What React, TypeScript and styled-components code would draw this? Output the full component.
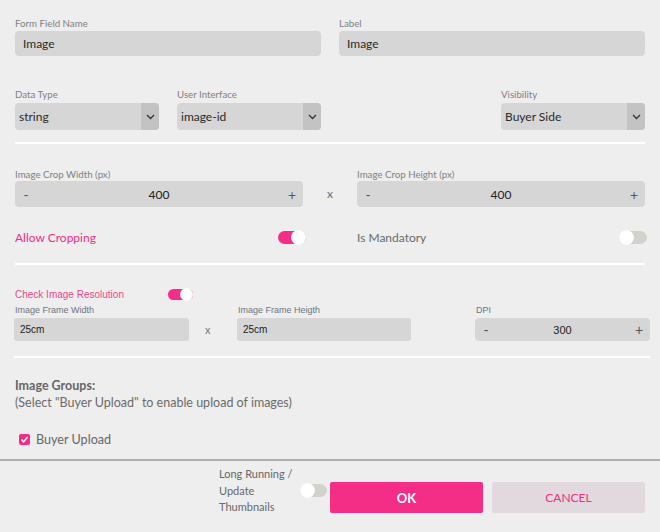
import React from "react";
import styled, { createGlobalStyle } from "styled-components";

const PINK = "#f42d86";

const Global = createGlobalStyle`
  html, body { margin: 0; padding: 0; background: #eeeeee; }
  body { font-family: Lato, "Open Sans", sans-serif; }
  * { box-sizing: border-box; }
`;

const Page = styled.div`
  width: 660px;
  height: 532px;
  background: #eeeeee;
  display: flex;
  flex-direction: column;
  overflow: hidden;
`;

const Section = styled.div<{ $top: number }>`
  padding: 0 15px;
  margin-top: ${(p) => p.$top}px;
`;

const Grid = styled.div<{ $cols: string; $gap?: number }>`
  display: grid;
  grid-template-columns: ${(p) => p.$cols};
  column-gap: ${(p) => p.$gap ?? 18}px;
  align-items: start;
`;

const Field = styled.div<{ $gap?: number }>`
  display: flex;
  flex-direction: column;
  gap: ${(p) => p.$gap ?? 2}px;
  min-width: 0;
`;

const Label = styled.div`
  font-size: 9.7px;
  line-height: 12px;
  color: #808080;
  white-space: nowrap;
`;

const TextInput = styled.div<{ $h?: number }>`
  height: ${(p) => p.$h ?? 25}px;
  background: #d6d6d6;
  border-radius: 4px;
  padding: 0 8px;
  display: flex;
  align-items: center;
  font-size: 12px;
  color: #2a2a2a;
`;

const SelectBox = styled.div`
  height: 27px;
  background: #d6d6d6;
  border-radius: 4px;
  display: flex;
  align-items: stretch;
  font-size: 12px;
  color: #2a2a2a;
  overflow: hidden;
`;

const SelectValue = styled.div`
  flex: 1;
  display: flex;
  align-items: center;
  padding: 0 4px;
`;

const SelectArrow = styled.div`
  width: 18px;
  background: #c3c3c3;
  display: flex;
  align-items: center;
  justify-content: center;
`;

const Stepper = styled.div<{ $h?: number; $font?: string }>`
  height: ${(p) => p.$h ?? 26}px;
  background: #d6d6d6;
  border-radius: 4px;
  display: flex;
  align-items: center;
  justify-content: space-between;
  padding: 0 6px;
  font-family: ${(p) => p.$font ?? "Lato, sans-serif"};
  font-size: 12px;
  color: #222;
`;

const StepSign = styled.span`
  font-size: 14px;
  color: #555;
  width: 10px;
  text-align: center;
`;

const StepValue = styled.span<{ $size?: number }>`
  font-size: ${(p) => p.$size ?? 12}px;
`;

const Times = styled.div<{ $pt: number }>`
  padding-top: ${(p) => p.$pt}px;
  text-align: center;
  font-size: 12px;
  color: #6b6b6b;
  font-family: Lato, sans-serif;
`;

const Divider = styled.div<{ $top: number; $ml?: number; $mr?: number }>`
  height: 2px;
  background: #ffffff;
  margin-top: ${(p) => p.$top}px;
  margin-left: ${(p) => p.$ml ?? 15}px;
  margin-right: ${(p) => p.$mr ?? 15}px;
`;

const ToggleRow = styled.div<{ $h?: number }>`
  height: ${(p) => p.$h ?? 16}px;
  display: flex;
  align-items: center;
  justify-content: space-between;
`;

const ToggleText = styled.span<{ $pink?: boolean }>`
  font-size: 12px;
  color: ${(p) => (p.$pink ? PINK : "#6a6a6a")};
`;

const ToggleWrap = styled.div<{ $w: number; $h: number }>`
  position: relative;
  width: ${(p) => p.$w}px;
  height: ${(p) => p.$h}px;
  flex: none;
`;

const Track = styled.div<{ $on: boolean }>`
  position: absolute;
  left: 0;
  right: 0;
  top: 1px;
  bottom: 1px;
  border-radius: 8px;
  background: ${(p) => (p.$on ? PINK : "#d2d2cd")};
`;

const Knob = styled.div<{ $on: boolean; $d: number }>`
  position: absolute;
  top: 0;
  width: ${(p) => p.$d}px;
  height: ${(p) => p.$d}px;
  border-radius: 50%;
  background: #ffffff;
  ${(p) => (p.$on ? "right: 0;" : "left: 0;")}
  box-shadow: 0 0 1px rgba(0, 0, 0, 0.08);
`;

const Toggle: React.FC<{ on: boolean; w?: number; h?: number }> = ({ on, w = 28, h = 15 }) => (
  <ToggleWrap $w={w} $h={h}>
    <Track $on={on} />
    <Knob $on={on} $d={h} />
  </ToggleWrap>
);

const Chevron = () => (
  <svg width="9" height="6" viewBox="0 0 9 6">
    <polyline points="1,1 4.5,4.5 8,1" fill="none" stroke="#333" strokeWidth="1.3" />
  </svg>
);

/* resolution block (different font) */
const ResSection = styled.div`
  margin: 22px 10px 0 14px;
  font-family: "Liberation Sans", Arial, sans-serif;
`;

const ResHead = styled.div`
  height: 14px;
  display: flex;
  align-items: center;
`;

const ResTitle = styled.span`
  width: 154px;
  font-size: 10px;
  color: #f0468c;
  padding-left: 1px;
`;

const ResRow = styled.div`
  display: flex;
  align-items: flex-start;
  margin-top: 4px;
`;

const ResField = styled.div<{ $w: number }>`
  width: ${(p) => p.$w}px;
  display: flex;
  flex-direction: column;
  gap: 2px;
  flex: none;
`;

const ResLabel = styled.div`
  font-size: 9px;
  line-height: 11px;
  color: #6e7480;
  padding-left: 1px;
`;

const ResInput = styled.div`
  height: 23px;
  background: #d6d6d6;
  border-radius: 3px;
  padding: 0 6px;
  display: flex;
  align-items: center;
  font-size: 10px;
  color: #222;
`;

const ResTimes = styled.div<{ $w: number }>`
  width: ${(p) => p.$w}px;
  flex: none;
  padding-top: 19px;
  padding-left: 16px;
  font-size: 11px;
  color: #6e7480;
`;

const ResSpacer = styled.div<{ $w: number }>`
  width: ${(p) => p.$w}px;
  flex: none;
`;

const Groups = styled.div`
  margin-top: 19px;
  padding: 0 15px;
  font-size: 12.5px;
  line-height: 17px;
  color: #6a6a6a;
`;

const GroupsTitle = styled.div`
  font-weight: 700;
  color: #666;
`;

const CheckRow = styled.div`
  margin-top: 19px;
  padding-left: 19px;
  height: 18px;
  display: flex;
  align-items: center;
  gap: 6px;
  font-size: 12.6px;
  color: #666;
`;

const CheckBox = styled.span`
  width: 11px;
  height: 11px;
  border-radius: 2px;
  background: ${PINK};
  display: flex;
  align-items: center;
  justify-content: center;
`;

const BottomLine = styled.div`
  margin-top: 11px;
  height: 2px;
  background: #aeaeae;
`;

const Footer = styled.div`
  display: flex;
  justify-content: flex-end;
  align-items: flex-start;
  padding: 5px 15px 0 0;
`;

const FooterText = styled.div`
  width: 78px;
  font-size: 11px;
  line-height: 16.5px;
  color: #666;
  margin-right: 3px;
`;

const FooterToggle = styled.div`
  margin-top: 17px;
  margin-right: 3px;
`;

const Button = styled.button<{ $primary?: boolean }>`
  width: 153px;
  height: 31px;
  margin-top: 16px;
  margin-left: ${(p) => (p.$primary ? 0 : 9)}px;
  border: none;
  border-radius: 2px;
  background: ${(p) => (p.$primary ? PINK : "#e1d9dd")};
  color: ${(p) => (p.$primary ? "#fff" : PINK)};
  font-family: Lato, sans-serif;
  font-size: ${(p) => (p.$primary ? 13 : 12)}px;
  font-weight: ${(p) => (p.$primary ? 700 : 400)};
  cursor: pointer;
`;

export default function App() {
  return (
    <Page>
      <Global />
      <Section $top={17}>
        <Grid $cols="1fr 1fr">
          <Field>
            <Label>Form Field Name</Label>
            <TextInput>Image</TextInput>
          </Field>
          <Field>
            <Label>Label</Label>
            <TextInput>Image</TextInput>
          </Field>
        </Grid>
      </Section>

      <Section $top={32}>
        <Grid $cols="repeat(4, 1fr)">
          <Field $gap={3}>
            <Label>Data Type</Label>
            <SelectBox>
              <SelectValue>string</SelectValue>
              <SelectArrow><Chevron /></SelectArrow>
            </SelectBox>
          </Field>
          <Field $gap={3}>
            <Label>User Interface</Label>
            <SelectBox>
              <SelectValue>image-id</SelectValue>
              <SelectArrow><Chevron /></SelectArrow>
            </SelectBox>
          </Field>
          <div />
          <Field $gap={3}>
            <Label>Visibility</Label>
            <SelectBox>
              <SelectValue>Buyer Side</SelectValue>
              <SelectArrow><Chevron /></SelectArrow>
            </SelectBox>
          </Field>
        </Grid>
      </Section>

      <Divider $top={12} />

      <Section $top={24}>
        <Grid $cols="288px 1fr 288px" $gap={0}>
          <Field $gap={1}>
            <Label>Image Crop Width (px)</Label>
            <Stepper>
              <StepSign>-</StepSign>
              <StepValue>400</StepValue>
              <StepSign>+</StepSign>
            </Stepper>
          </Field>
          <Times $pt={18}>x</Times>
          <Field $gap={1}>
            <Label>Image Crop Height (px)</Label>
            <Stepper>
              <StepSign>-</StepSign>
              <StepValue>400</StepValue>
              <StepSign>+</StepSign>
            </Stepper>
          </Field>
        </Grid>
      </Section>

      <Section $top={22}>
        <Grid $cols="291px 51px 290px" $gap={0}>
          <ToggleRow>
            <ToggleText $pink>Allow Cropping</ToggleText>
            <Toggle on />
          </ToggleRow>
          <div />
          <ToggleRow>
            <ToggleText>Is Mandatory</ToggleText>
            <Toggle on={false} />
          </ToggleRow>
        </Grid>
      </Section>

      <Divider $top={18} />

      <ResSection>
        <ResHead>
          <ResTitle>Check Image Resolution</ResTitle>
          <Toggle on w={25} h={13} />
        </ResHead>
        <ResRow>
          <ResField $w={175}>
            <ResLabel>Image Frame Width</ResLabel>
            <ResInput>25cm</ResInput>
          </ResField>
          <ResTimes $w={48}>x</ResTimes>
          <ResField $w={174}>
            <ResLabel>Image Frame Heigth</ResLabel>
            <ResInput>25cm</ResInput>
          </ResField>
          <ResSpacer $w={64} />
          <ResField $w={175}>
            <ResLabel>DPI</ResLabel>
            <Stepper $h={23} $font={'"Liberation Sans", Arial, sans-serif'}>
              <StepSign>-</StepSign>
              <StepValue $size={11}>300</StepValue>
              <StepSign>+</StepSign>
            </Stepper>
          </ResField>
        </ResRow>
      </ResSection>

      <Divider $top={15} $ml={14} $mr={10} />

      <Groups>
        <GroupsTitle>Image Groups:</GroupsTitle>
        <div>(Select "Buyer Upload" to enable upload of images)</div>
      </Groups>

      <CheckRow>
        <CheckBox>
          <svg width="9" height="9" viewBox="0 0 9 9">
            <polyline points="1.5,4.6 3.6,6.7 7.6,2" fill="none" stroke="#fff" strokeWidth="1.6" />
          </svg>
        </CheckBox>
        Buyer Upload
      </CheckRow>

      <BottomLine />

      <Footer>
        <FooterText>
          Long Running /<br />Update<br />Thumbnails
        </FooterText>
        <FooterToggle>
          <Toggle on={false} w={27} h={15} />
        </FooterToggle>
        <Button $primary>OK</Button>
        <Button>CANCEL</Button>
      </Footer>
    </Page>
  );
}
